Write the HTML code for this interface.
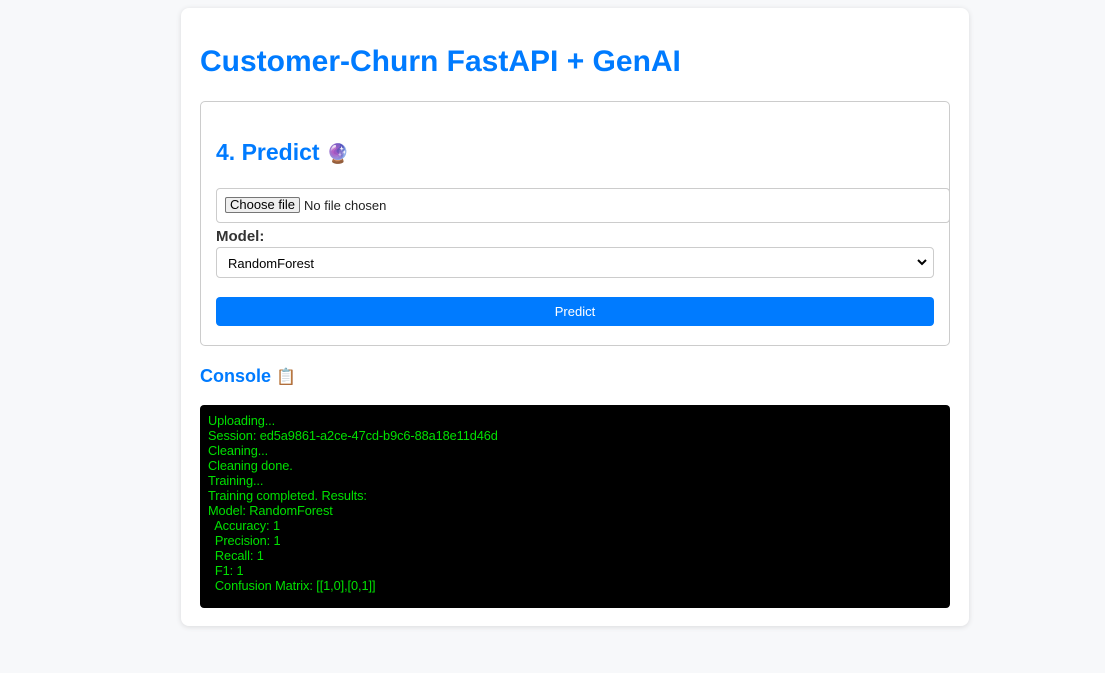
<!DOCTYPE html>
<html><head><meta charset="utf-8"><style>
*{box-sizing:border-box;margin:0;padding:0}
body{width:1105px;height:673px;background:#f7f8fa;font-family:"Liberation Sans",Arial,sans-serif;position:relative;overflow:hidden}
.card{position:absolute;left:181px;top:8px;width:788px;height:618px;background:#fff;border-radius:8px;box-shadow:0 1px 6px rgba(0,0,0,.12)}
.abs{position:absolute}
h1{position:absolute;left:200px;top:45px;font-size:30px;font-weight:bold;color:#007bff;white-space:nowrap}
.sec{left:200px;top:101px;width:750px;height:245px;border:1px solid #ccc;border-radius:5px}
h2{position:absolute;left:216px;top:139px;font-size:23px;font-weight:bold;color:#007bff;white-space:nowrap}
.file{left:216px;top:188px;width:734px;height:35px;border:1px solid #ccc;border-radius:4px}
.btnf{left:225px;top:197px;width:75px;height:16px;border:1px solid #767676;background:#efefef;border-radius:2px;font-size:13px;line-height:14px;text-align:center;color:#000}
.nf{left:304px;top:198px;font-size:13px;color:#222}
.lbl{left:216px;top:228px;font-size:15px;font-weight:bold;color:#333}
.sel{left:216px;top:247px;width:718px;height:31px;border:1px solid #ccc;border-radius:4px;font-size:13px;padding:8px 0 0 11px;color:#000}
.pb{left:216px;top:297px;width:718px;height:29px;background:#007bff;border-radius:4px;color:#fff;font-size:13px;text-align:center;line-height:29px}
h3{position:absolute;left:200px;top:366px;font-size:18px;font-weight:bold;color:#007bff;white-space:nowrap}
.con{left:200px;top:405px;width:750px;height:203px;background:#000;border-radius:4px;color:#00e000;font-size:12.8px;letter-spacing:-0.1px;line-height:15px;padding:8px 8px;white-space:pre}
</style></head><body>
<div class="card"></div>
<h1>Customer-Churn FastAPI + GenAI</h1>
<div class="abs sec"></div>
<h2>4. Predict <span style="font-size:19px">🔮</span></h2>
<div class="abs file"></div>
<div class="abs btnf">Choose file</div>
<div class="abs nf">No file chosen</div>
<div class="abs lbl">Model:</div>
<div class="abs sel">RandomForest<svg style="position:absolute;right:6px;top:11px" width="10" height="7" viewBox="0 0 10 7"><path d="M1 1l4 4 4-4" stroke="#000" stroke-width="2" fill="none"/></svg></div>
<div class="abs pb">Predict</div>
<h3>Console <span style="font-size:16px">📋</span></h3>
<div class="abs con">Uploading...
Session: ed5a9861-a2ce-47cd-b9c6-88a18e11d46d
Cleaning...
Cleaning done.
Training...
Training completed. Results:
Model: RandomForest
  Accuracy: 1
  Precision: 1
  Recall: 1
  F1: 1
  Confusion Matrix: [[1,0],[0,1]]</div>
</body></html>
